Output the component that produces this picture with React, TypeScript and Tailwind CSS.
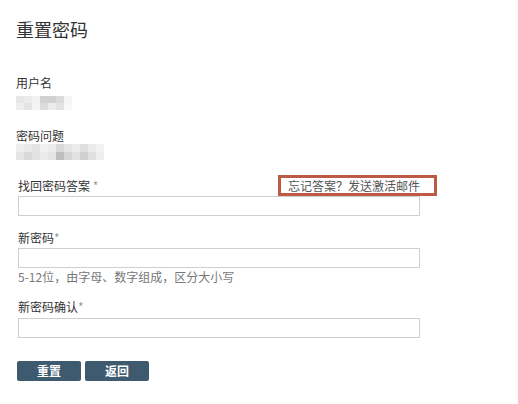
import React from "react";

const font = { fontFamily: '"Noto Sans CJK SC", "Noto Sans", sans-serif' };

const userCells = [
  ["#e6e6e6", "#ececec", "#f2f2f2", "#d2d2d2", "#d0d0d0", "#dadada", "#f4f4f4"],
  ["#eeeeee", "#e4e4e4", "#f3f3f3", "#dcdcdc", "#ebebeb", "#e2e2e2", "#f7f7f7"],
];
const qCells = [
  ["#ededed", "#e9e9e9", "#e3e3e3", "#f0f0f0", "#ececec", "#d8d8d8", "#e4e4e4", "#ececec", "#dedede", "#eaeaea", "#f2f2f2"],
  ["#e5e5e5", "#d9d9d9", "#e1e1e1", "#ebebeb", "#e4e4e4", "#bdbdbd", "#d6d6d6", "#e2e2e2", "#cfcfcf", "#e0e0e0", "#ededed"],
];

function Mosaic({ cells, w, h }: { cells: string[][]; w: number; h: number }) {
  return (
    <div className="flex flex-col">
      {cells.map((row, i) => (
        <div key={i} className="flex">
          {row.map((c, j) => (
            <div key={j} style={{ background: c, width: w, height: h }} />
          ))}
        </div>
      ))}
    </div>
  );
}

function Input() {
  return <div className="w-[402px] h-[20px] border border-[#cfcfcf] bg-white" />;
}

export default function App() {
  return (
    <div className="w-[518px] h-[404px] bg-white text-[#333] overflow-hidden" style={font}>
      <div className="pl-[16px] pt-[17px]">
        <div className="text-[18px] leading-[24px] text-[#333]">重置密码</div>
        <div className="mt-[34px] text-[12px] leading-[16px]">用户名</div>
        <div className="mt-[5px]">
          <Mosaic cells={userCells} w={8} h={7} />
        </div>
        <div className="mt-[18px] text-[12px] leading-[16px]">密码问题</div>
        <div className="mt-[0px]">
          <Mosaic cells={qCells} w={8} h={8} />
        </div>
        <div className="pl-[2px]">
          <div className="mt-[17px] flex items-center h-[18px] relative">
            <span className="text-[12px] leading-[16px]">
              找回密码答案 <span className="text-[#999]">*</span>
            </span>
            <div className="absolute left-[260px] top-[-2px] w-[159px] h-[21px] border-[3px] border-[#bd5a44] flex items-center pl-[7px] text-[12px] leading-[15px] text-[#555] bg-white">
              忘记答案？发送激活邮件
            </div>
          </div>
          <div className="mt-[1px]">
            <Input />
          </div>
          <div className="mt-[14px] text-[12px] leading-[16px]">
            新密码<span className="text-[#999]">*</span>
          </div>
          <div className="mt-[2px]">
            <Input />
          </div>
          <div className="mt-[1px] text-[12px] leading-[16px] text-[#777]">
            5-12位，由字母、数字组成，区分大小写
          </div>
          <div className="mt-[14px] text-[12px] leading-[16px]">
            新密码确认<span className="text-[#999]">*</span>
          </div>
          <div className="mt-[3px]">
            <Input />
          </div>
        </div>
        <div className="mt-[23px] flex gap-[4px] pl-[1px]">
          <button className="w-[64px] h-[20px] rounded-[2px] bg-[#3d5a6e] text-white text-[12px] leading-[20px] font-bold">
            重置
          </button>
          <button className="w-[64px] h-[20px] rounded-[2px] bg-[#3d5a6e] text-white text-[12px] leading-[20px] font-bold">
            返回
          </button>
        </div>
      </div>
    </div>
  );
}
